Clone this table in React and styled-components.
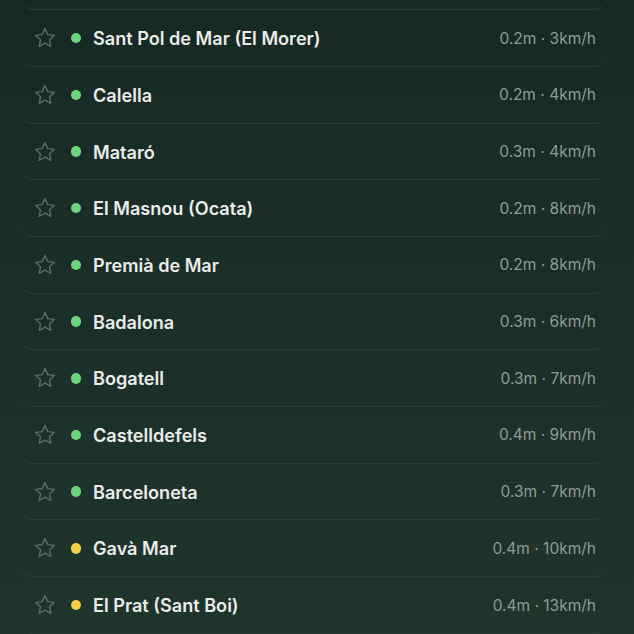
import React from "react"
import styled, { createGlobalStyle } from "styled-components"

const GlobalStyle = createGlobalStyle`
    html, body {
        margin: 0;
        padding: 0;
        height: 100%;
        overflow: hidden;
    }
    body {
        background: linear-gradient(180deg, #172923 0%, #1b2f28 50%, #1f352c 100%);
        font-family: Inter, "Noto Sans", "Liberation Sans", sans-serif;
        -webkit-font-smoothing: antialiased;
    }
`;

const List = styled.div`
    display: flex;
    flex-direction: column;
    margin: -46.4px 26px 0 20px;
`;

const Row = styled.div`
    box-sizing: border-box;
    height: 56.7px;
    display: flex;
    align-items: center;
    padding: 0 12px 0 13px;
    border-bottom: 1px solid #2b3f37;
    border-radius: 14px;
`;

const Star = styled.svg`
    width: 24px;
    height: 24px;
    flex-shrink: 0;
    color: #5d6d66;
`;

const Dot = styled.span`
    width: 10.5px;
    height: 10.5px;
    border-radius: 50%;
    margin: 0 12px 0 13.5px;
    flex-shrink: 0;
    background: ${p => (p.$level === "warn" ? "#f3cf45" : "#6bd57d")};
`;

const Name = styled.div`
    flex: 1;
    font-size: 18.1px;
    font-weight: 600;
    color: #e9ecea;
`;

const Stats = styled.div`
    font-size: 15.5px;
    color: #8e9d97;
`;

const StarIcon = () => (
    <Star viewBox="0 0 24 24" fill="none" stroke="currentColor" strokeWidth="1.4" strokeLinejoin="round">
        <path d="M12 2.6l2.8 6 6.55.8-4.85 4.45 1.3 6.45L12 17.1l-5.8 3.2 1.3-6.45L2.65 9.4l6.55-.8z" />
    </Star>
);

const beaches = [
    { name: "Sant Pol de Mar (El Morer)", wave: "0.2m", wind: "3km/h", level: "ok" },
    { name: "Calella", wave: "0.2m", wind: "4km/h", level: "ok" },
    { name: "Mataró", wave: "0.3m", wind: "4km/h", level: "ok" },
    { name: "El Masnou (Ocata)", wave: "0.2m", wind: "8km/h", level: "ok" },
    { name: "Premià de Mar", wave: "0.2m", wind: "8km/h", level: "ok" },
    { name: "Badalona", wave: "0.3m", wind: "6km/h", level: "ok" },
    { name: "Bogatell", wave: "0.3m", wind: "7km/h", level: "ok" },
    { name: "Castelldefels", wave: "0.4m", wind: "9km/h", level: "ok" },
    { name: "Barceloneta", wave: "0.3m", wind: "7km/h", level: "ok" },
    { name: "Gavà Mar", wave: "0.4m", wind: "10km/h", level: "warn" },
    { name: "El Prat (Sant Boi)", wave: "0.4m", wind: "13km/h", level: "warn" },
];

const App = () => {
    return (
        <>
            <GlobalStyle />
            <List>
                <Row aria-hidden="true" />
                {beaches.map(b => (
                    <Row key={b.name}>
                        <StarIcon />
                        <Dot $level={b.level} />
                        <Name>{b.name}</Name>
                        <Stats>{b.wave} · {b.wind}</Stats>
                    </Row>
                ))}
            </List>
        </>
    )
}

export default App;
